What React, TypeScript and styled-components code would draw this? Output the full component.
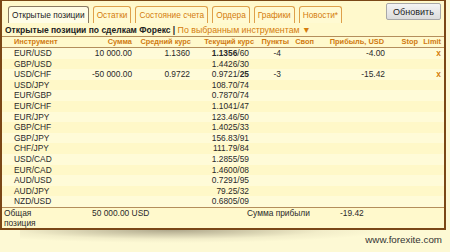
import React from "react";
import styled, { createGlobalStyle } from "styled-components";

const GlobalStyle = createGlobalStyle`
  body {
    margin: 0;
    background: #fdf9d4;
    font-family: "Liberation Sans", Arial, sans-serif;
  }
`;

const Page = styled.div`
  width: 450px;
  height: 252px;
  position: relative;
  overflow: hidden;
`;

const Panel = styled.div`
  box-sizing: border-box;
  width: 446px;
  border: 2px solid #7a4716;
  border-top-width: 1px;
  background: #fff9cc;
  display: flex;
  flex-direction: column;
  & > * {
    flex-shrink: 0;
  }
`;

const TopBar = styled.div`
  display: flex;
  justify-content: space-between;
  align-items: flex-start;
  height: 24px;
  padding: 2px 3px 0 6px;
  box-sizing: border-box;
`;

const Tabs = styled.div`
  display: flex;
  gap: 4px;
  margin-top: 3px;
`;

const Tab = styled.div<{ $active?: boolean }>`
  height: 16px;
  line-height: 16px;
  padding: 0 3px;
  font-size: 8.3px;
  border: 1px solid ${(p) => (p.$active ? "#8a7a62" : "#dea04a")};
  border-bottom: none;
  border-radius: 3px 3px 0 0;
  background: ${(p) => (p.$active ? "#fffde6" : "#fffad2")};
  color: ${(p) => (p.$active ? "#222" : "#d47c0c")};
  white-space: nowrap;
`;

const RefreshButton = styled.button`
  width: 55px;
  height: 17px;
  padding: 0;
  font-family: "Liberation Sans", Arial, sans-serif;
  font-size: 9px;
  color: #222;
  background: linear-gradient(#f4f4f4, #dcdcdc);
  border: 1px solid #a8a8a8;
  border-radius: 2px;
`;

const Heading = styled.div`
  height: 11px;
  line-height: 11px;
  padding-left: 3px;
  font-size: 8.5px;
  font-weight: bold;
  color: #222;
  border-bottom: 1px solid #b48e5c;
  white-space: nowrap;
`;

const Filter = styled.span`
  font-size: 8.8px;
  font-weight: normal;
  color: #d47c0c;
`;

const columns = "90px 41px 59px 63px 35px 25px 72px 33px 24px";

const HeaderRow = styled.div`
  display: grid;
  grid-template-columns: ${columns};
  height: 10px;
  line-height: 10px;
  font-size: 7.4px;
  font-weight: bold;
  color: #d07a10;
  border-bottom: 1px solid #b48e5c;
  white-space: nowrap;
`;

const HeadCell = styled.div<{ $align?: string; $pad?: number }>`
  text-align: ${(p) => p.$align || "right"};
  padding: ${(p) => (p.$align === "left" ? `0 0 0 12px` : `0 ${p.$pad || 0}px 0 0`)};
`;

const Row = styled.div<{ $odd?: boolean }>`
  display: grid;
  grid-template-columns: ${columns};
  height: 10.6px;
  line-height: 10.6px;
  font-size: 8.4px;
  color: #2a2a2a;
  background: ${(p) => (p.$odd ? "#fffbd8" : "#fff8c8")};
  white-space: nowrap;
`;

const Cell = styled.div<{ $align?: string; $pad?: number }>`
  text-align: ${(p) => p.$align || "right"};
  padding: ${(p) => (p.$align === "left" ? `0 0 0 12px` : `0 ${p.$pad || 0}px 0 0`)};
`;

const Close = styled.span`
  color: #d47c0c;
  font-weight: bold;
`;

const Footer = styled.div`
  display: grid;
  grid-template-columns: 90px 155px 93px 1fr;
  height: 20px;
  border-top: 1px solid #b48e5c;
  font-size: 8.4px;
  line-height: 10.5px;
  color: #2a2a2a;
`;

const FooterLabel = styled.div`
  padding-left: 2px;
  width: 40px;
`;

const Shadow = styled.div`
  height: 13px;
  width: 360px;
  margin-left: 20px;
  background: radial-gradient(ellipse 60% 100% at 42% 0%, rgba(110, 100, 80, 0.55), rgba(180, 170, 140, 0.15) 70%, rgba(0, 0, 0, 0));
`;

const Site = styled.div`
  position: absolute;
  right: 8px;
  top: 234px;
  font-size: 9.8px;
  color: #333;
`;

type Quote = {
  pair: string;
  sum?: string;
  avg?: string;
  rate: React.ReactNode;
  points?: string;
  profit?: string;
  close?: boolean;
};

const quotes: Quote[] = [
  { pair: "EUR/USD", sum: "10 000.00", avg: "1.1360", rate: <><b>1.1356</b>/60</>, points: "-4", profit: "-4.00", close: true },
  { pair: "GBP/USD", rate: "1.4426/30" },
  { pair: "USD/CHF", sum: "-50 000.00", avg: "0.9722", rate: <>0.9721/<b>25</b></>, points: "-3", profit: "-15.42", close: true },
  { pair: "USD/JPY", rate: "108.70/74" },
  { pair: "EUR/GBP", rate: "0.7870/74" },
  { pair: "EUR/CHF", rate: "1.1041/47" },
  { pair: "EUR/JPY", rate: "123.46/50" },
  { pair: "GBP/CHF", rate: "1.4025/33" },
  { pair: "GBP/JPY", rate: "156.83/91" },
  { pair: "CHF/JPY", rate: "111.79/84" },
  { pair: "USD/CAD", rate: "1.2855/59" },
  { pair: "EUR/CAD", rate: "1.4600/08" },
  { pair: "AUD/USD", rate: "0.7291/95" },
  { pair: "AUD/JPY", rate: "79.25/32" },
  { pair: "NZD/USD", rate: "0.6805/09" },
];

const tabs = ["Открытые позиции", "Остатки", "Состояние счета", "Ордера", "Графики", "Новости*"];

const App: React.FC = () => {
  return (
    <Page>
      <GlobalStyle />
      <Panel>
        <TopBar>
          <Tabs>
            {tabs.map((t, i) => (
              <Tab key={t} $active={i === 0}>
                {t}
              </Tab>
            ))}
          </Tabs>
          <RefreshButton>Обновить</RefreshButton>
        </TopBar>
        <Heading>
          Открытые позиции по сделкам Форекс | <Filter>По выбранным инструментам ▼</Filter>
        </Heading>
        <HeaderRow>
          <HeadCell $align="left">Инструмент</HeadCell>
          <HeadCell $pad={1}>Сумма</HeadCell>
          <HeadCell $pad={1}>Средний курс</HeadCell>
          <HeadCell $pad={1}>Текущий курс</HeadCell>
          <HeadCell $pad={1}>Пункты</HeadCell>
          <HeadCell $pad={1}>Своп</HeadCell>
          <HeadCell $pad={3}>Прибыль, USD</HeadCell>
          <HeadCell $pad={2}>Stop</HeadCell>
          <HeadCell $pad={3}>Limit</HeadCell>
        </HeaderRow>
        {quotes.map((q, i) => (
          <Row key={q.pair} $odd={i % 2 === 0}>
            <Cell $align="left">{q.pair}</Cell>
            <Cell $pad={1}>{q.sum}</Cell>
            <Cell $pad={2}>{q.avg}</Cell>
            <Cell $pad={6}>{q.rate}</Cell>
            <Cell $pad={9}>{q.points}</Cell>
            <Cell />
            <Cell $pad={2}>{q.profit}</Cell>
            <Cell />
            <Cell $pad={3}>{q.close && <Close>x</Close>}</Cell>
          </Row>
        ))}
        <Footer>
          <FooterLabel>Общая позиция</FooterLabel>
          <div>50 000.00 USD</div>
          <div>Сумма прибыли</div>
          <div>-19.42</div>
        </Footer>
      </Panel>
      <Shadow />
      <Site>www.forexite.com</Site>
    </Page>
  );
};

export default App;
